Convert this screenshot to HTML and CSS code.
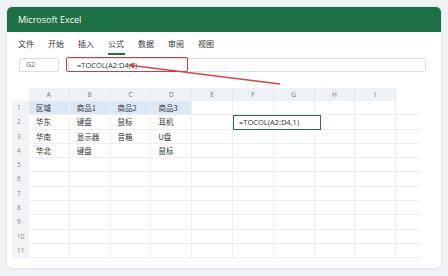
FILE: index.html
```html
<!DOCTYPE html>
<html lang="zh">
<head>
<meta charset="utf-8">
<link rel="stylesheet" href="styles.css">
</head>
<body>
<div class="card">
  <div class="titlebar">Microsoft Excel</div>
  <div class="tabs">
    <span class="tab">文件</span>
    <span class="tab">开始</span>
    <span class="tab">插入</span>
    <span class="tab active">公式</span>
    <span class="tab">数据</span>
    <span class="tab">审阅</span>
    <span class="tab">视图</span>
  </div>
  <div class="fbar">
    <div class="namebox">G2</div>
    <div class="formula">=TOCOL(A2:D4,1)</div>
  </div>
  <div class="sheet">
    <div class="row head">
      <div class="rn corner"></div>
      <div class="c">A</div><div class="c">B</div><div class="c">C</div><div class="c">D</div><div class="c">E</div><div class="c">F</div><div class="c">G</div><div class="c">H</div><div class="c">I</div><div class="c x"></div>
    </div>
    <div class="row">
      <div class="rn">1</div>
      <div class="c hl">区域</div><div class="c hl">商品1</div><div class="c hl">商品2</div><div class="c hl">商品3</div><div class="c"></div><div class="c"></div><div class="c"></div><div class="c"></div><div class="c"></div><div class="c x"></div>
    </div>
    <div class="row">
      <div class="rn">2</div>
      <div class="c">华东</div><div class="c">键盘</div><div class="c">鼠标</div><div class="c">耳机</div><div class="c"></div><div class="c edit-host"><div class="editor">=TOCOL(A2:D4,1)</div></div><div class="c"></div><div class="c"></div><div class="c"></div><div class="c x"></div>
    </div>
    <div class="row">
      <div class="rn">3</div>
      <div class="c">华南</div><div class="c">显示器</div><div class="c">音箱</div><div class="c">U盘</div><div class="c"></div><div class="c"></div><div class="c"></div><div class="c"></div><div class="c"></div><div class="c x"></div>
    </div>
    <div class="row">
      <div class="rn">4</div>
      <div class="c">华北</div><div class="c">键盘</div><div class="c"></div><div class="c">鼠标</div><div class="c"></div><div class="c"></div><div class="c"></div><div class="c"></div><div class="c"></div><div class="c x"></div>
    </div>
    <div class="row"><div class="rn">5</div><div class="c"></div><div class="c"></div><div class="c"></div><div class="c"></div><div class="c"></div><div class="c"></div><div class="c"></div><div class="c"></div><div class="c"></div><div class="c x"></div></div>
    <div class="row"><div class="rn">6</div><div class="c"></div><div class="c"></div><div class="c"></div><div class="c"></div><div class="c"></div><div class="c"></div><div class="c"></div><div class="c"></div><div class="c"></div><div class="c x"></div></div>
    <div class="row"><div class="rn">7</div><div class="c"></div><div class="c"></div><div class="c"></div><div class="c"></div><div class="c"></div><div class="c"></div><div class="c"></div><div class="c"></div><div class="c"></div><div class="c x"></div></div>
    <div class="row"><div class="rn">8</div><div class="c"></div><div class="c"></div><div class="c"></div><div class="c"></div><div class="c"></div><div class="c"></div><div class="c"></div><div class="c"></div><div class="c"></div><div class="c x"></div></div>
    <div class="row"><div class="rn">9</div><div class="c"></div><div class="c"></div><div class="c"></div><div class="c"></div><div class="c"></div><div class="c"></div><div class="c"></div><div class="c"></div><div class="c"></div><div class="c x"></div></div>
    <div class="row"><div class="rn">10</div><div class="c"></div><div class="c"></div><div class="c"></div><div class="c"></div><div class="c"></div><div class="c"></div><div class="c"></div><div class="c"></div><div class="c"></div><div class="c x"></div></div>
    <div class="row"><div class="rn">11</div><div class="c"></div><div class="c"></div><div class="c"></div><div class="c"></div><div class="c"></div><div class="c"></div><div class="c"></div><div class="c"></div><div class="c"></div><div class="c x"></div></div>
  </div>
  <div class="callout"></div>
  <svg class="arrow" width="434" height="261" viewBox="0 0 434 261">
    <line x1="273" y1="77" x2="125" y2="58.5" stroke="#d24646" stroke-width="1.4"/>
    <path d="M120.5 58 L127.5 55.4 L126.8 61.6 Z" fill="#d24646"/>
  </svg>
</div>
</body>
</html>
```
FILE: styles.css
```css
* { box-sizing: border-box; }
html, body { margin: 0; padding: 0; }
body {
  width: 448px;
  height: 276px;
  background: #f1f2f6;
  font-family: "Open Sans", "Noto Sans CJK SC", sans-serif;
  overflow: hidden;
  padding: 7px;
}
.card {
  position: relative;
  width: 434px;
  height: 261px;
  background: #fff;
  border-radius: 5px;
  box-shadow: 0 0 0 1px #e4e6eb, 0 1px 3px rgba(0,0,0,0.06);
  overflow: hidden;
}
.titlebar {
  height: 25px;
  background: #1e7145;
  color: #fff;
  font-size: 9px;
  line-height: 25px;
  padding-left: 11px;
}
.tabs {
  display: flex;
  gap: 13px;
  padding: 6px 0 0 11px;
  height: 45px;
  align-items: flex-start;
}
.tab {
  font-family: "Noto Sans CJK SC", sans-serif;
  font-size: 8px;
  line-height: 11px;
  color: #333;
  padding-bottom: 4px;
  border-bottom: 2px solid transparent;
  width: 17px;
}
.tab.active { border-bottom-color: #1e7145; }
.fbar {
  display: flex;
  gap: 9px;
  padding: 0 15px 0 12px;
  margin-top: -19px;
  height: 14px;
}
.namebox {
  width: 40px;
  height: 14px;
  border: 1px solid #dedfe3;
  border-radius: 2px;
  font-size: 7px;
  line-height: 12px;
  color: #666;
  padding-left: 6px;
}
.formula {
  flex: 1;
  height: 14px;
  border: 1px solid #dedfe3;
  border-radius: 3px;
  font-size: 7.5px;
  line-height: 12px;
  color: #333;
  padding-left: 8px;
}
.sheet {
  margin: 16px 0 0 5px;
  width: 413px;
}
.row {
  display: flex;
  height: 14.3px;
}
.rn {
  width: 17px;
  flex: none;
  background: #f1f3f6;
  font-size: 6.5px;
  color: #888;
  line-height: 14px;
  padding-left: 5px;
}
.rn.corner { background: #fff; }
.c {
  width: 40.8px;
  flex: none;
  border-right: 1px solid #efefef;
  border-bottom: 1px solid #efefef;
  font-family: "Noto Sans CJK SC", sans-serif;
  font-size: 7.5px;
  line-height: 13px;
  color: #333;
  padding-left: 7px;
}
.c.x { width: 24px; border-right: none; }
.head { height: 13px; }
.head .c {
  background: #eef1f5;
  border-bottom: none;
  border-right: 1px solid #e6e8ec;
  font-family: "Open Sans", sans-serif;
  font-size: 6.5px;
  color: #777;
  text-align: center;
  padding-left: 0;
  line-height: 13px;
}
.head .c.x { background: #fff; border-right: none; }
.c.hl { background: #dde8f7; }
.edit-host { position: relative; }
.editor {
  position: absolute;
  left: 0;
  top: -0.5px;
  width: 88px;
  height: 15px;
  border: 1.5px solid #2f6b50;
  background: #fff;
  font-family: "Open Sans", sans-serif;
  font-size: 7.5px;
  line-height: 12px;
  padding-left: 5px;
  color: #333;
  z-index: 2;
}
.callout {
  position: absolute;
  left: 59px;
  top: 50px;
  width: 122px;
  height: 15px;
  border: 1.5px solid #d13b3b;
  border-radius: 2px;
}
.arrow {
  position: absolute;
  left: 0;
  top: 0;
}
```
